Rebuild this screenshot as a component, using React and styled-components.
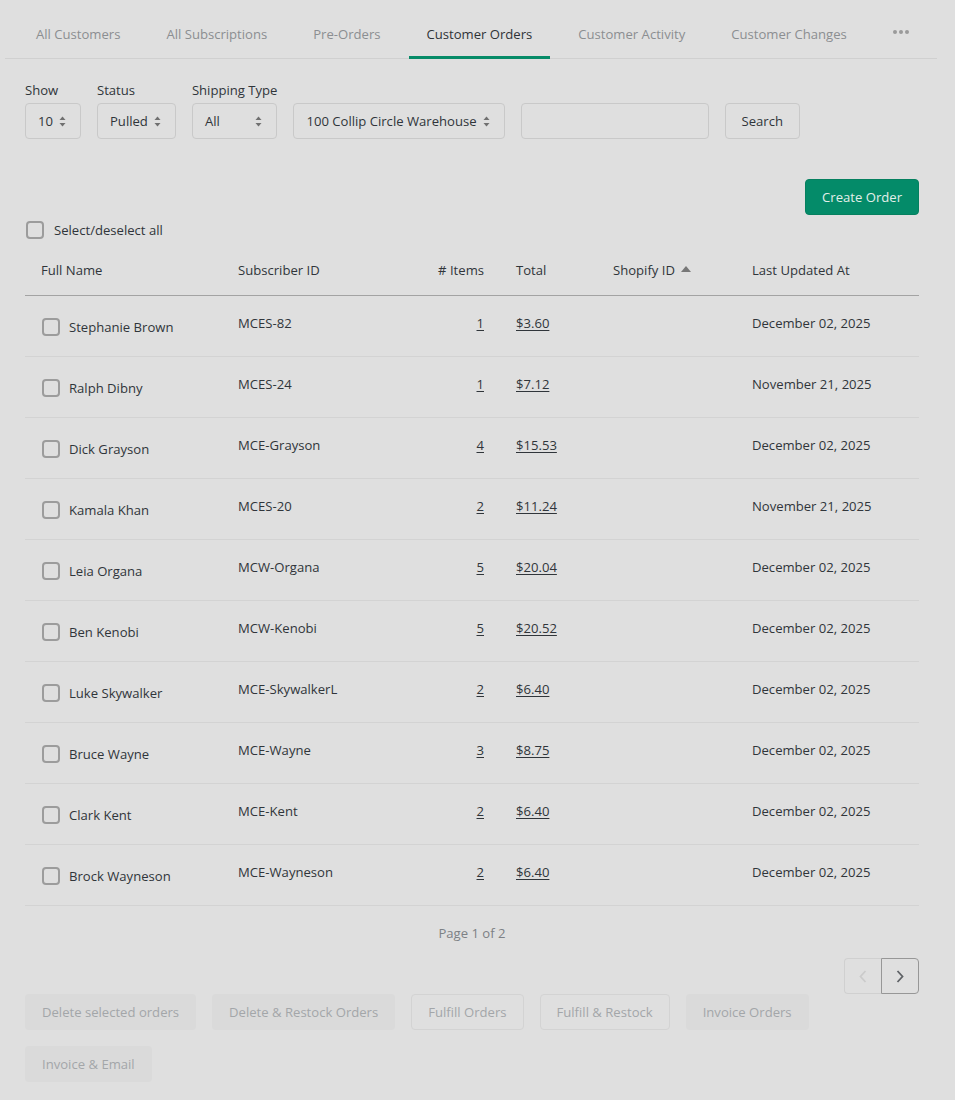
import React from "react";
import styled, { createGlobalStyle } from "styled-components";

const GlobalStyle = createGlobalStyle`
  body {
    margin: 0;
    background: #dfdfdf;
    font-family: "Open Sans", "Noto Sans", sans-serif;
    font-size: 13.1px;
    color: #30353a;
  }
  * { box-sizing: border-box; }
`;

const tabs = [
  "All Customers",
  "All Subscriptions",
  "Pre-Orders",
  "Customer Orders",
  "Customer Activity",
  "Customer Changes",
];

const orders = [
  { name: "Stephanie Brown", sub: "MCES-82", items: 1, total: "$3.60", date: "December 02, 2025" },
  { name: "Ralph Dibny", sub: "MCES-24", items: 1, total: "$7.12", date: "November 21, 2025" },
  { name: "Dick Grayson", sub: "MCE-Grayson", items: 4, total: "$15.53", date: "December 02, 2025" },
  { name: "Kamala Khan", sub: "MCES-20", items: 2, total: "$11.24", date: "November 21, 2025" },
  { name: "Leia Organa", sub: "MCW-Organa", items: 5, total: "$20.04", date: "December 02, 2025" },
  { name: "Ben Kenobi", sub: "MCW-Kenobi", items: 5, total: "$20.52", date: "December 02, 2025" },
  { name: "Luke Skywalker", sub: "MCE-SkywalkerL", items: 2, total: "$6.40", date: "December 02, 2025" },
  { name: "Bruce Wayne", sub: "MCE-Wayne", items: 3, total: "$8.75", date: "December 02, 2025" },
  { name: "Clark Kent", sub: "MCE-Kent", items: 2, total: "$6.40", date: "December 02, 2025" },
  { name: "Brock Wayneson", sub: "MCE-Wayneson", items: 2, total: "$6.40", date: "December 02, 2025" },
];

const actions = [
  { label: "Delete selected orders", outline: false },
  { label: "Delete & Restock Orders", outline: false },
  { label: "Fulfill Orders", outline: true },
  { label: "Fulfill & Restock", outline: true },
  { label: "Invoice Orders", outline: false },
  { label: "Invoice & Email", outline: false },
];

const Arrows = () => (
  <svg width="7" height="11" viewBox="0 0 7 11">
    <path d="M3.5 0.5 L6.5 4 L0.5 4 Z" fill="#707070" />
    <path d="M3.5 10.5 L6.5 7 L0.5 7 Z" fill="#707070" />
  </svg>
);

const Page = styled.div`
  padding: 0 36px 18px 25px;
`;

const TabBar = styled.nav`
  display: flex;
  align-items: flex-end;
  gap: 10px;
  margin: 0 -18px 0 -20px;
  padding-left: 13px;
  border-bottom: 1px solid #d0d0d0;
`;

const Tab = styled.div`
  padding: 25px 18px 13px;
  line-height: 18px;
  white-space: nowrap;
  color: ${(p) => (p.active ? "#2f3337" : "#8b8e91")};
  border-bottom: 3px solid ${(p) => (p.active ? "#078b68" : "transparent")};
  margin-bottom: -1px;
`;

const More = styled.div`
  display: flex;
  gap: 2px;
  padding: 0 18px 24px 18px;
  span {
    width: 4px;
    height: 4px;
    border-radius: 50%;
    background: #9a9a9a;
  }
`;

const Filters = styled.div`
  display: flex;
  align-items: flex-end;
  gap: 16px;
  margin-top: 21px;
`;

const Field = styled.div`
  display: flex;
  flex-direction: column;
  gap: 3px;
`;

const Label = styled.div`
  line-height: 20px;
  color: #30353a;
`;

const Select = styled.div`
  height: 36px;
  display: flex;
  align-items: center;
  justify-content: space-between;
  gap: 6px;
  padding: 0 14px 0 12px;
  border: 1px solid #c9c9c9;
  border-radius: 4px;
  white-space: nowrap;
`;

const Input = styled.div`
  width: 188px;
  height: 36px;
  border: 1px solid #c9c9c9;
  border-radius: 4px;
`;

const Button = styled.div`
  height: 36px;
  display: inline-flex;
  align-items: center;
  padding: 0 16px;
  border-radius: 4px;
  white-space: nowrap;
  border: 1px solid ${(p) => (p.primary ? "#06805f" : "#c9c9c9")};
  background: ${(p) => (p.primary ? "#048b69" : "transparent")};
  color: ${(p) => (p.primary ? "#e3efea" : "#30353a")};
`;

const Toolbar = styled.div`
  display: flex;
  justify-content: flex-end;
  margin-top: 40px;
`;

const SelectAll = styled.label`
  display: flex;
  align-items: center;
  gap: 10px;
  margin-top: 5px;
  padding-left: 1px;
  line-height: 20px;
`;

const Check = styled.span`
  width: 18px;
  height: 18px;
  flex: none;
  border: 2px solid #9c9c9c;
  border-radius: 4px;
`;

const Grid = styled.div`
  display: grid;
  grid-template-columns: 197px 198px 80px 97px 139px 1fr;
  align-items: start;
  height: ${(p) => p.height}px;
  border-bottom: 1px solid ${(p) => (p.head ? "#a3a3a3" : "#d3d3d3")};
`;

const HeadRow = styled(Grid)`
  margin-top: 4px;
  padding-top: 15px;
`;

const Cell = styled.div`
  padding: 0 16px;
  line-height: 22px;
  white-space: nowrap;
  text-align: ${(p) => (p.right ? "right" : "left")};
  padding-top: ${(p) => p.top || 0}px;
`;

const NameCell = styled.div`
  display: flex;
  align-items: center;
  gap: 9px;
  padding: 21px 0 0 17px;
  line-height: 20px;
  white-space: nowrap;
`;

const Caret = styled.span`
  display: inline-block;
  margin-left: 6px;
  vertical-align: 3px;
  border-left: 5px solid transparent;
  border-right: 5px solid transparent;
  border-bottom: 6px solid #777;
`;

const Link = styled.a`
  color: #30353a;
  text-decoration: underline;
  text-underline-offset: 2px;
`;

const PageInfo = styled.div`
  text-align: center;
  color: #7d8185;
  line-height: 20px;
  margin-top: 17px;
`;

const Pager = styled.div`
  display: flex;
  justify-content: flex-end;
  margin-top: 15px;
`;

const PageButton = styled.div`
  width: ${(p) => (p.next ? 38 : 37)}px;
  height: 36px;
  display: flex;
  align-items: center;
  justify-content: center;
  border: 1px solid ${(p) => (p.next ? "#979797" : "#d0d0d0")};
  border-radius: ${(p) => (p.next ? "0 4px 4px 0" : "4px 0 0 4px")};
  ${(p) => (p.next ? "" : "border-right: none;")}
`;

const Actions = styled.div`
  display: flex;
  flex-wrap: wrap;
  gap: 16px;
`;

const ActionButton = styled.div`
  height: 36px;
  display: flex;
  align-items: center;
  padding: 0 16px;
  border-radius: 4px;
  color: #a3a6a9;
  white-space: nowrap;
  border: 1px solid ${(p) => (p.outline ? "#d3d3d3" : "transparent")};
  background: ${(p) => (p.outline ? "transparent" : "#dadada")};
`;

export default function App() {
  return (
    <>
      <GlobalStyle />
      <Page>
        <TabBar>
          {tabs.map((t) => (
            <Tab key={t} active={t === "Customer Orders"}>
              {t}
            </Tab>
          ))}
          <More>
            <span />
            <span />
            <span />
          </More>
        </TabBar>

        <Filters>
          <Field>
            <Label>Show</Label>
            <Select>
              10 <Arrows />
            </Select>
          </Field>
          <Field>
            <Label>Status</Label>
            <Select>
              Pulled <Arrows />
            </Select>
          </Field>
          <Field>
            <Label>Shipping Type</Label>
            <Select>
              All <Arrows />
            </Select>
          </Field>
          <Select>
            100 Collip Circle Warehouse <Arrows />
          </Select>
          <Input />
          <Button>Search</Button>
        </Filters>

        <Toolbar>
          <Button primary>Create Order</Button>
        </Toolbar>

        <SelectAll>
          <Check />
          Select/deselect all
        </SelectAll>

        <HeadRow head height={52}>
          <Cell>Full Name</Cell>
          <Cell>Subscriber ID</Cell>
          <Cell right>
            # Items
          </Cell>
          <Cell>Total</Cell>
          <Cell>
            Shopify ID
            <Caret />
          </Cell>
          <Cell>Last Updated At</Cell>
        </HeadRow>

        {orders.map((o) => (
          <Grid key={o.name} height={61}>
            <NameCell>
              <Check />
              {o.name}
            </NameCell>
            <Cell top={16}>{o.sub}</Cell>
            <Cell top={16} right>
              <Link>{o.items}</Link>
            </Cell>
            <Cell top={16}>
              <Link>{o.total}</Link>
            </Cell>
            <Cell top={16} />
            <Cell top={16}>{o.date}</Cell>
          </Grid>
        ))}

        <PageInfo>Page 1 of 2</PageInfo>

        <Pager>
          <PageButton>
            <svg width="8" height="13" viewBox="0 0 8 13">
              <path d="M6.5 1 L1.5 6.5 L6.5 12" stroke="#cbcbcb" strokeWidth="1.8" fill="none" />
            </svg>
          </PageButton>
          <PageButton next>
            <svg width="8" height="13" viewBox="0 0 8 13">
              <path d="M1.5 1 L6.5 6.5 L1.5 12" stroke="#5f6266" strokeWidth="1.8" fill="none" />
            </svg>
          </PageButton>
        </Pager>

        <Actions>
          {actions.map((a) => (
            <ActionButton key={a.label} outline={a.outline}>
              {a.label}
            </ActionButton>
          ))}
        </Actions>
      </Page>
    </>
  );
}
